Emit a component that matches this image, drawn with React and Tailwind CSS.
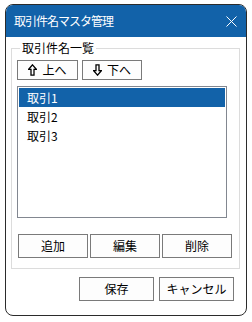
import React from "react";

const font = { fontFamily: '"Noto Sans CJK JP", "Noto Sans", sans-serif' };

const Arrow = ({ down }) => (
    <svg width="9" height="12" viewBox="0 0 9 12" className={down ? "rotate-180" : ""}>
        <polygon
            points="4.5,0.8 8.3,5.3 6,5.3 6,11.2 3,11.2 3,5.3 0.7,5.3"
            fill="white"
            stroke="black"
            strokeWidth="1.3"
            strokeLinejoin="miter"
        />
    </svg>
);

const Btn = ({ className = "", children }) => (
    <button
        type="button"
        className={"flex items-center justify-center border border-[#7a7a7a] bg-[#fdfdfd] text-[12px] leading-none text-black " + className}
    >
        {children}
    </button>
);

export default function App() {
    const items = ["取引1", "取引2", "取引3"];

    return (
        <div className="w-[252px] h-[322px] bg-white pt-[4px] pl-[5px]" style={font}>
            <div className="w-[242px] h-[312px] border border-[#2b2b2b] rounded-[8px] overflow-hidden flex flex-col bg-white">
                {/* title bar */}
                <div className="h-[32px] bg-[#1262a9] flex items-center justify-between pl-[8px] pr-[9px]">
                    <span className="text-white text-[12px] tracking-[-1px]">取引件名マスタ管理</span>
                    <svg width="11" height="11" viewBox="0 0 11 11">
                        <path d="M0.5 0.5 L10.5 10.5 M10.5 0.5 L0.5 10.5" stroke="white" strokeWidth="1" />
                    </svg>
                </div>

                {/* body */}
                <div className="flex-1 flex flex-col">
                    <fieldset className="mt-[4px] ml-[5px] mr-[6px] border border-[#dcdcdc] px-[5px] pb-[10px]">
                        <legend className="ml-[3px] px-[2px] text-[12px] leading-[14px] text-black">取引件名一覧</legend>

                        <div className="mt-[5px] flex gap-[4px]">
                            <Btn className="w-[61px] h-[20px] gap-[5px]">
                                <Arrow />
                                <span>上へ</span>
                            </Btn>
                            <Btn className="w-[60px] h-[20px] gap-[5px]">
                                <Arrow down />
                                <span>下へ</span>
                            </Btn>
                        </div>

                        <div className="mt-[6px] w-[210px] h-[132px] border border-[#828790] bg-white p-[1px]">
                            {items.map((t, i) => (
                                <div
                                    key={t}
                                    className={
                                        "h-[19px] flex items-center pl-[8px] text-[12px] " +
                                        (i === 0 ? "bg-[#1262a9] text-white" : "text-black")
                                    }
                                >
                                    {t}
                                </div>
                            ))}
                        </div>

                        <div className="mt-[16px] ml-[1px] flex gap-[2px]">
                            <Btn className="w-[70px] h-[24px]">追加</Btn>
                            <Btn className="w-[70px] h-[24px]">編集</Btn>
                            <Btn className="w-[70px] h-[24px]">削除</Btn>
                        </div>
                    </fieldset>

                    <div className="mt-[8px] mr-[12px] flex justify-end gap-[5px]">
                        <Btn className="w-[75px] h-[24px]">保存</Btn>
                        <Btn className="w-[75px] h-[24px]">キャンセル</Btn>
                    </div>
                </div>
            </div>
        </div>
    );
}
